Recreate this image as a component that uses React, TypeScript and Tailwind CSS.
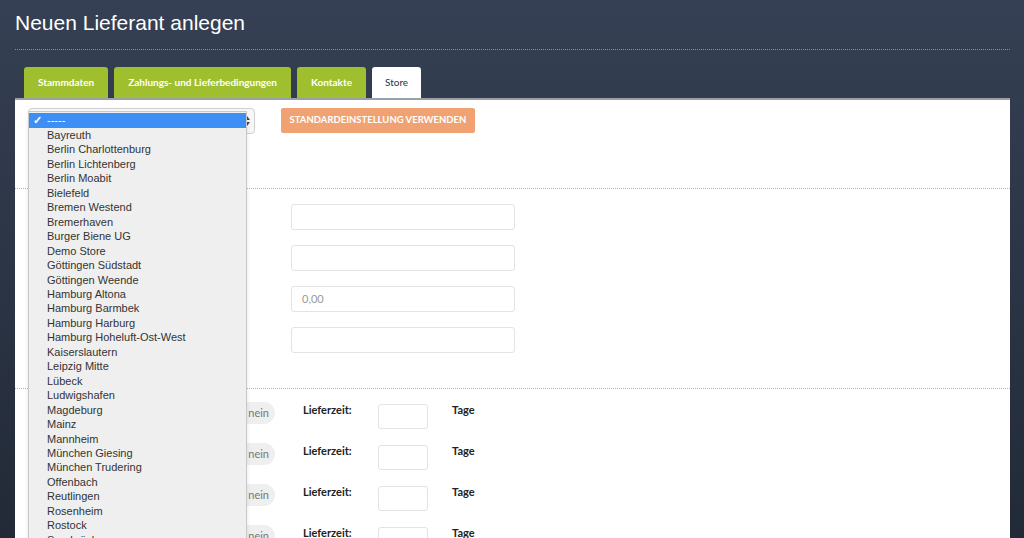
import React from "react";

const stores = [
  "Bayreuth",
  "Berlin Charlottenburg",
  "Berlin Lichtenberg",
  "Berlin Moabit",
  "Bielefeld",
  "Bremen Westend",
  "Bremerhaven",
  "Burger Biene UG",
  "Demo Store",
  "Göttingen Südstadt",
  "Göttingen Weende",
  "Hamburg Altona",
  "Hamburg Barmbek",
  "Hamburg Harburg",
  "Hamburg Hoheluft-Ost-West",
  "Kaiserslautern",
  "Leipzig Mitte",
  "Lübeck",
  "Ludwigshafen",
  "Magdeburg",
  "Mainz",
  "Mannheim",
  "München Giesing",
  "München Trudering",
  "Offenbach",
  "Reutlingen",
  "Rosenheim",
  "Rostock",
  "Saarbrücken",
];

const tabs = ["Stammdaten", "Zahlungs- und Lieferbedingungen", "Kontakte"];

function StoreDropdown() {
  return (
    <div className="absolute left-[13px] top-[11px] w-[219px] border border-[#c8c8c8] bg-[#efefef] pt-[1px] shadow-md font-['Liberation_Sans',sans-serif] text-[11px] leading-[14.45px] text-[#333]">
      <div className="flex h-[15px] items-center bg-[#3d8ef5] text-white">
        <span className="w-[18px] pl-[4px] text-[11px] font-bold">✓</span>
        <span>-----</span>
      </div>
      {stores.map((s) => (
        <div key={s} className="pl-[18px] whitespace-nowrap">
          {s}
        </div>
      ))}
    </div>
  );
}

function DeliveryRow() {
  return (
    <div className="flex h-[41px] items-start pl-[222px]">
      <div className="mt-[-2px] flex h-[22px] w-[38px] items-center justify-end rounded-full bg-[#efefef] pr-[6px] text-[11px] text-[#777]">
        nein
      </div>
      <div className="ml-[28px] mt-[-2px] w-[75px] text-[11px] font-bold text-[#222]">Lieferzeit:</div>
      <div className="h-[25px] w-[50px] rounded-[3px] border border-[#e3e3e3] bg-white" />
      <div className="ml-[24px] mt-[-2px] text-[11px] font-bold text-[#222]">Tage</div>
    </div>
  );
}

export default function App() {
  return (
    <div className="h-[538px] w-[1024px] overflow-hidden bg-gradient-to-b from-[#364054] to-[#222a37] font-['Lato',sans-serif]">
      <div className="px-[15px] pt-[10px]">
        <h1 className="font-['Liberation_Sans',sans-serif] text-[21px] font-light leading-[26px] text-white">
          Neuen Lieferant anlegen
        </h1>
        <div className="mt-[13px] mr-[-1px] border-t border-dotted border-[#8a93a3]" />
        <div className="mt-[17px] flex gap-[6px] pl-[9px]">
          {tabs.map((t) => (
            <div
              key={t}
              className="flex h-[31px] items-center rounded-t-[3px] bg-[#9fbf2e] px-[14px] text-[10px] font-bold text-white"
            >
              {t}
            </div>
          ))}
          <div className="flex h-[31px] items-center rounded-t-[3px] bg-white px-[13px] text-[10px] text-[#333]">
            Store
          </div>
        </div>
        <div className="relative h-[440px] w-[995px] border-t-2 border-[#9aa0a8] bg-white">
          <div className="flex items-start gap-[26px] pl-[13px] pt-[8px]">
            <div className="flex h-[26px] w-[227px] items-center justify-end rounded-[4px] border border-[#cfcfcf] bg-[#f7f7f7] pr-[4px]">
              <svg width="6" height="10" viewBox="0 0 6 10" fill="#444">
                <path d="M3 0 L6 4 H0 Z" />
                <path d="M3 10 L6 6 H0 Z" />
              </svg>
            </div>
            <button className="flex h-[25px] w-[194px] items-center justify-center rounded-[2px] bg-[#f0a272] text-[9.5px] font-bold text-white">
              STANDARDEINSTELLUNG VERWENDEN
            </button>
          </div>
          <div className="mt-[54px] border-t border-dotted border-[#b5b5b5]" />
          <div className="flex flex-col gap-[15px] pl-[276px] pt-[15px]">
            <div className="h-[26px] w-[224px] rounded-[3px] border border-[#e3e3e3]" />
            <div className="h-[26px] w-[224px] rounded-[3px] border border-[#e3e3e3]" />
            <div className="flex h-[26px] w-[224px] items-center rounded-[3px] border border-[#e3e3e3] pl-[10px] text-[11px] text-[#999]">
              0,00
            </div>
            <div className="h-[26px] w-[224px] rounded-[3px] border border-[#e3e3e3]" />
          </div>
          <div className="mt-[35px] border-t border-dotted border-[#b5b5b5]" />
          <div className="pt-[15px]">
            <DeliveryRow />
            <DeliveryRow />
            <DeliveryRow />
            <DeliveryRow />
          </div>
          <StoreDropdown />
        </div>
      </div>
    </div>
  );
}
